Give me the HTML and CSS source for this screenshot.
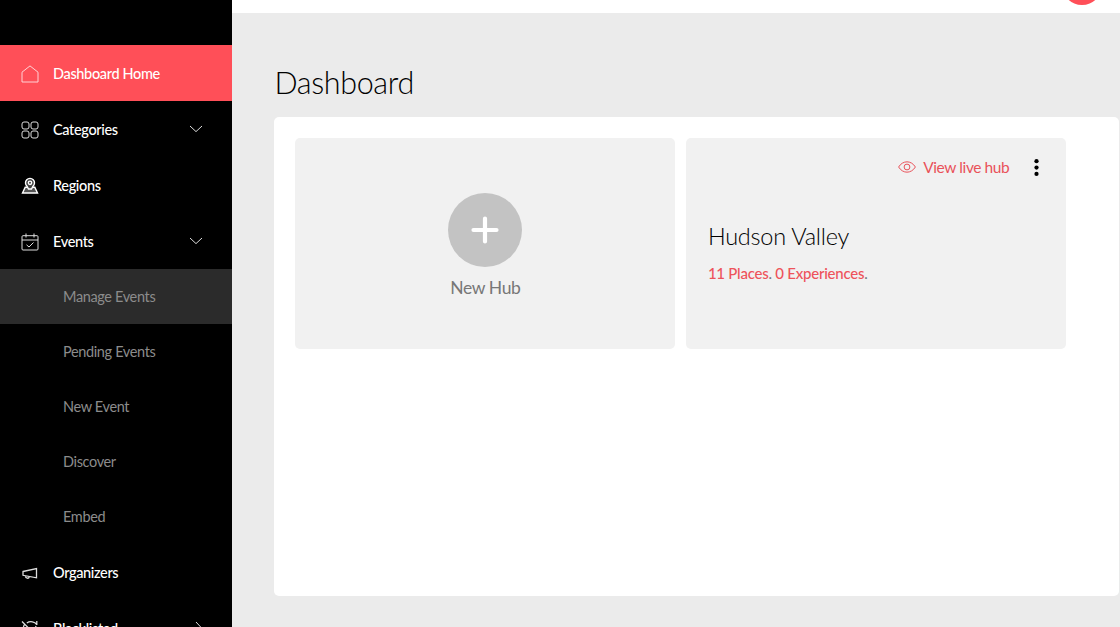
FILE: index.html
```html
<!DOCTYPE html>
<html lang="en">
<head>
    <meta charset="UTF-8">
    <meta name="viewport" content="width=device-width, initial-scale=1.0">
    <title>Dashboard</title>
    <link rel="stylesheet" href="styles.css">
</head>
<body>
    <!-- Sidebar -->
    <nav class="sidebar">
        <a class="nav-item active">
            <svg class="icon" viewBox="0 0 18 18"><path d="M1 7.2 9 .9l8 6.300V17H1z"/></svg>
            <span>Dashboard Home</span>
        </a>
        <a class="nav-item">
            <svg class="icon" viewBox="0 0 18 18"><rect x="1" y="1" width="7" height="7" rx="2"/><rect x="10" y="1" width="7" height="7" rx="2"/><rect x="1" y="10" width="7" height="7" rx="2"/><rect x="10" y="10" width="7" height="7" rx="2"/></svg>
            <span>Categories</span>
            <svg class="chevron" viewBox="0 0 14 8"><path d="M1 1l6 5.600L13 1"/></svg>
        </a>
        <a class="nav-item">
            <svg class="icon regions" viewBox="0 0 18 18"><path class="land" d="M4.200 10.200h9.600l2.700 5.800h-15z"/><path class="pin" d="M6 9.200a4.500 4.500 0 1 1 6 0L10.500 12h-3z"/><circle cx="9" cy="5.800" r="1.700"/></svg>
            <span>Regions</span>
        </a>
        <a class="nav-item">
            <svg class="icon" viewBox="0 0 18 18"><rect x="1" y="2.700" width="16" height="14.300" rx="1"/><path d="M1 7h16M5 .5v4M13 .5v4M5.500 11.800l2.500 2.200 4.500-4.500"/></svg>
            <span>Events</span>
            <svg class="chevron" viewBox="0 0 14 8"><path d="M1 1l6 5.600L13 1"/></svg>
        </a>
        <div class="submenu">
            <a class="sub-item selected">Manage Events</a>
            <a class="sub-item">Pending Events</a>
            <a class="sub-item">New Event</a>
            <a class="sub-item">Discover</a>
            <a class="sub-item">Embed</a>
        </div>
        <a class="nav-item">
            <svg class="icon bold" viewBox="0 0 18 18"><path d="M2 7.500 15.500 4.600v9.200L2 11.300zM4.300 11.800c.2 3 3.600 3.200 4 .8"/></svg>
            <span>Organizers</span>
        </a>
        <a class="nav-item">
            <svg class="icon bold" viewBox="0 0 18 18"><path d="M1 1.500 17 17.500M5.800 3c3.400-2.400 8-1.400 10 1.600M15.800 1v4M3.500 4.500C1.800 7 2 11 4.500 13.500M14.500 6c1.500 2.500.8 4.500-.2 6"/></svg>
            <span>Blacklisted</span>
            <svg class="chevron right" viewBox="0 0 8 14"><path d="M1 1l5.600 6L1 13"/></svg>
        </a>
    </nav>

    <!-- Main content -->
    <div class="main">
        <header class="topbar">
            <div class="avatar"></div>
        </header>
        <main class="content">
            <h1>Dashboard</h1>
            <section class="panel">
                <div class="card new-hub">
                    <div class="add">
                        <svg viewBox="0 0 28 28"><path d="M14 2.500v23M2.500 14h23"/></svg>
                    </div>
                    <span>New Hub</span>
                </div>
                <div class="card hub">
                    <div class="hub-top">
                        <a class="live">
                            <svg class="eye" viewBox="0 0 18 12"><path d="M.6 6C4.800-.9 13.200-.9 17.400 6 13.200 12.900 4.800 12.900.6 6z"/><circle cx="9" cy="6" r="2.900"/></svg>
                            <span>View live hub</span>
                        </a>
                        <svg class="dots" viewBox="0 0 4 16"><circle cx="2" cy="2" r="2"/><circle cx="2" cy="8" r="2"/><circle cx="2" cy="14" r="2"/></svg>
                    </div>
                    <h2>Hudson Valley</h2>
                    <p><b>11 Places</b>. <b>0 Experiences</b>.</p>
                </div>
            </section>
        </main>
    </div>
</body>
</html>
```

FILE: styles.css
```css
* {
    box-sizing: border-box;
}
body {
    margin: 0;
    height: 627px;
    display: flex;
    overflow: hidden;
    font-family: Lato, sans-serif;
    background-color: #ebebeb;
}
svg {
    fill: none;
    flex-shrink: 0;
}

/* Sidebar */
.sidebar {
    width: 232px;
    height: 627px;
    flex-shrink: 0;
    padding-top: 45px;
    background-color: #000;
    overflow: hidden;
}
.nav-item {
    display: flex;
    align-items: center;
    height: 56px;
    padding: 0 29px 0 20.5px;
    color: #fff;
    font-size: 14.5px;
    font-weight: 500;
    letter-spacing: -0.35px;
    line-height: 20px;
}
.nav-item span {
    padding-top: 2px;
}
.nav-item.active {
    background-color: #ff4f58;
}
.icon {
    width: 18px;
    height: 18px;
    margin: 2px 14.5px 0 0;
    stroke: #ddd;
}
.active .icon {
    stroke: #ffd3d5;
}
.icon.bold {
    stroke-width: 1.3;
}
.regions {
    stroke: #fff;
    stroke-width: 1.4;
}
.regions .land {
    fill: #555;
}
.regions .pin {
    fill: #444;
}
.chevron {
    width: 14px;
    height: 8px;
    margin-left: auto;
    stroke: #ddd;
}
.chevron.right {
    width: 8px;
    height: 14px;
}
.sub-item {
    display: flex;
    align-items: center;
    height: 55px;
    padding: 0 0 1px 63px;
    color: #8c8c8c;
    font-size: 14.5px;
    letter-spacing: -0.36px;
}
.sub-item.selected {
    background-color: #2b2b2b;
}

/* Main content */
.main {
    flex: 1;
    min-width: 0;
}
.topbar {
    height: 13px;
    display: flex;
    align-items: flex-end;
    justify-content: flex-end;
    padding: 0 18px 8px 0;
    background-color: #fff;
}
.avatar {
    width: 40px;
    height: 40px;
    flex-shrink: 0;
    border-radius: 50%;
    background-color: #ff4f58;
}
.content {
    padding: 49px 1px 0 42.4px;
}
h1 {
    margin: 0 0 15px;
    font-size: 30.5px;
    font-weight: 300;
    letter-spacing: -0.35px;
    line-height: 40px;
}
.panel {
    display: flex;
    align-items: flex-start;
    gap: 11px;
    height: 479px;
    padding: 21px;
    border-radius: 5px;
    background-color: #fff;
}
.card {
    width: 380px;
    height: 211px;
    border-radius: 5px;
    background-color: #f1f1f1;
}
.new-hub {
    display: flex;
    flex-direction: column;
    align-items: center;
    padding-top: 55px;
    color: #777;
    font-size: 17.5px;
    letter-spacing: -0.4px;
    line-height: 22px;
}
.add {
    display: flex;
    align-items: center;
    justify-content: center;
    width: 74px;
    height: 74px;
    margin-bottom: 10px;
    border-radius: 50%;
    background-color: #c3c3c3;
}
.add svg {
    width: 28px;
    height: 28px;
    stroke: #fff;
    stroke-width: 4.2;
    stroke-linecap: round;
}
.hub {
    padding: 17px 27px 0 21.5px;
}
.hub-top {
    display: flex;
    align-items: center;
    justify-content: flex-end;
    gap: 25px;
    height: 24px;
}
.live {
    display: flex;
    align-items: center;
    gap: 7px;
    color: #e9525a;
    font-size: 15.5px;
    letter-spacing: -0.4px;
}
.eye {
    width: 18px;
    height: 12px;
    stroke: #e9525a;
}
.dots {
    width: 5px;
    height: 17px;
    fill: #000;
}
h2 {
    margin: 42px 0 12px;
    font-size: 23.5px;
    font-weight: 300;
    letter-spacing: -0.25px;
    line-height: 30px;
}
.hub p {
    margin: 0;
    color: #777;
    font-size: 15px;
    letter-spacing: -0.25px;
    line-height: 20px;
}
.hub p b {
    color: #ee535b;
    font-weight: 500;
}
```
